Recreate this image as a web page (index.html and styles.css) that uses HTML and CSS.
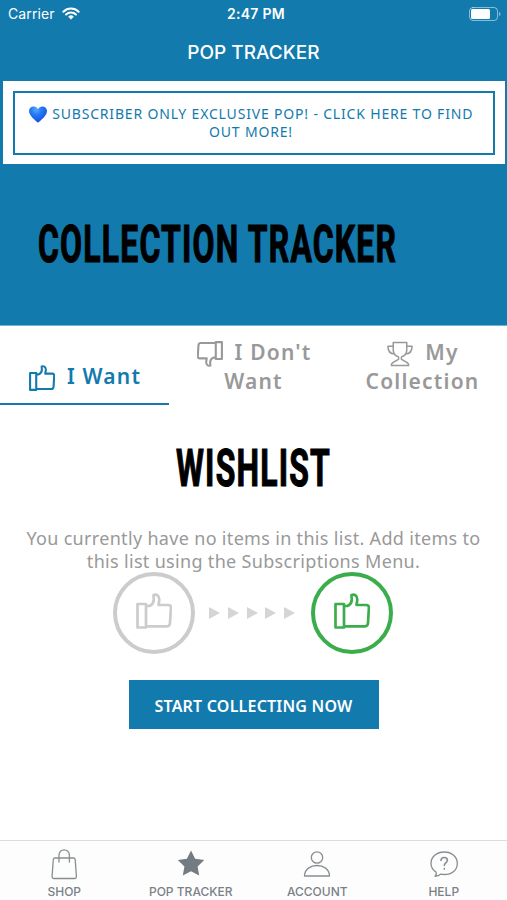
FILE: index.html
```html
<!DOCTYPE html>
<html lang="en">
<head>
  <meta charset="UTF-8">
  <meta name="viewport" content="width=device-width, initial-scale=1.0">
  <title>Pop Tracker</title>
  <link rel="stylesheet" href="styles.css">
</head>
<body>
  <!-- Shared icon shapes -->
  <svg class="sprite" width="0" height="0">
    <symbol id="thumb" viewBox="0 0 36 36">
      <path d="M1.500 11h8.500v23.500h-8.500zM10 13h3.500c2.500-1.200 4-3.200 4.300-6l-.3-5c3-1 5.800.6 5.800 4.500 0 2.200-.6 3.500-.8 5.500h9.700c1.800 0 2.800 1 2.700 2.800l-.9 15.200c-.2 2.200-1.200 3.300-3 3.300H10z"/>
    </symbol>
  </svg>

  <div class="app">
    <header>
      <div class="status-bar">
        <div class="carrier">
          <span>Carrier</span>
          <svg class="wifi" viewBox="0 0 18 13">
            <path d="M1.400 4.700a10.800 10.800 0 0 1 15.200 0M4.100 7.500a7 7 0 0 1 9.800 0" fill="none" stroke="#fff" stroke-width="2.100"/>
            <path d="M6.200 9.700a4 4 0 0 1 5.600 0L9 12.500z" fill="#fff"/>
          </svg>
        </div>
        <div class="time">2:47 PM</div>
        <svg class="battery" viewBox="0 0 32 14">
          <rect x=".5" y=".5" width="28" height="13" rx="3.500" fill="none" stroke="#fff" stroke-opacity=".5"/>
          <rect x="2" y="2" width="19" height="10" rx="1.500" fill="#fff"/>
          <path d="M30 5v4q1.500-.5 1.500-2T30 5z" fill="#fff" fill-opacity=".5"/>
        </svg>
      </div>
      <div class="nav-title">POP TRACKER</div>
    </header>

    <div class="notice">
      <a class="notice-link">
        <svg class="heart" viewBox="0 0 18 17">
          <defs>
            <radialGradient id="heart-fill" cx=".4" cy=".2" r=".8">
              <stop offset="0" stop-color="#55a8ff"/>
              <stop offset=".4" stop-color="#2478f5"/>
              <stop offset="1" stop-color="#124fe0"/>
            </radialGradient>
          </defs>
          <path d="M9 16.800C6 14 0 9.500 0 4.900 0 .3 6-1.500 9 3c3-4.500 9-2.700 9 1.900 0 4.600-6 9.100-9 11.900z" fill="url(#heart-fill)"/>
        </svg>
        SUBSCRIBER ONLY EXCLUSIVE POP! - CLICK HERE TO FIND<br>OUT MORE!
      </a>
    </div>

    <div class="hero">
      <h1><span class="condensed">COLLECTION TRACKER</span></h1>
    </div>

    <div class="tabs">
      <div class="tab active">
        <svg class="tab-icon"><use href="#thumb"/></svg>I Want
      </div>
      <div class="tab">
        <svg class="tab-icon flipped"><use href="#thumb"/></svg>I Don't<br>Want
      </div>
      <div class="tab">
        <svg class="tab-icon trophy" viewBox="0 0 27 26">
          <path d="M6.500 1h14v8c0 4-2.500 6-5.500 7v2.500l6 3.500c1 .7 1.500 1.500 1.500 3h-18c0-1.500.5-2.300 1.500-3l6-3.500V16C9 15 6.500 13 6.500 9zM6.500 5H1c0 4 1.500 8 7 8M20.500 5H26c0 4-1.500 8-7 8"/>
        </svg>My<br>Collection
      </div>
    </div>

    <main>
      <h2><span class="condensed">WISHLIST</span></h2>
      <p>You currently have no items in this list. Add items to<br>this list using the Subscriptions Menu.</p>
      <div class="steps">
        <div class="circle"><svg><use href="#thumb"/></svg></div>
        <div class="arrows"><i></i><i></i><i></i><i></i><i></i></div>
        <div class="circle done"><svg><use href="#thumb"/></svg></div>
      </div>
      <button class="btn">START COLLECTING NOW</button>
    </main>

    <nav>
      <div class="nav-item">
        <svg viewBox="0 0 30 32">
          <path d="M6 10h18.500q1.500 0 1.700 1.500l1.200 16.500q.2 2.500-2 2.500H5.100q-2.200 0-2-2.500l1.200-16.500q.2-1.500 1.700-1.500zM10 14V7a5.200 5.200 0 0 1 10.400 0v7"/>
        </svg>
        <span>SHOP</span>
      </div>
      <div class="nav-item">
        <svg viewBox="0 0 30 32">
          <path class="solid" d="M15 2.500l4.100 8.300 9.100 1.300-6.600 6.400 1.600 9.100L15 23.300l-8.200 4.300 1.600-9.100-6.600-6.400 9.100-1.300z"/>
        </svg>
        <span>POP TRACKER</span>
      </div>
      <div class="nav-item">
        <svg viewBox="0 0 30 32">
          <circle cx="15" cy="9.500" r="5.700"/>
          <path d="M2.500 28c0-14 25-14 25 0z"/>
        </svg>
        <span>ACCOUNT</span>
      </div>
      <div class="nav-item">
        <svg viewBox="0 0 30 32">
          <path d="M6 28.300c1.300-1.200 1.700-2.500 1.100-4.200C3.800 22 2 19 2 15.500 2 9 7.500 4 15.200 4S28.300 9 28.300 15.500 23 26.500 15.200 26.500q-1.700 0-3.200-.4-2.500 2-6 2.200z"/>
          <path class="question" d="M12 12.500q0-3 3.200-3t3.200 2.800c0 2.500-3.100 2.700-3.100 5.200M15.300 20.500v.6"/>
        </svg>
        <span>HELP</span>
      </div>
    </nav>
  </div>
</body>
</html>
```
FILE: styles.css
```css
:root {
  --primary: #127aad;
  --gray: #999;
  --green: #3bad4c;
}

* {
  margin: 0;
  padding: 0;
  box-sizing: border-box;
}

body {
  background-color: white;
  color: black;
  font-family: 'Noto Sans', sans-serif;
}

svg {
  fill: none;
  stroke-linecap: round;
  stroke-linejoin: round;
}

.sprite {
  display: block;
}

.app {
  display: flex;
  flex-direction: column;
  height: 900px;
}

header {
  height: 81px;
  background-color: var(--primary);
  color: white;
  font-family: Inter, sans-serif;
}

.status-bar {
  display: grid;
  grid-template-columns: 1fr 1fr 1fr;
  align-items: center;
  height: 27px;
  padding: 0 6px 0 8px;
  font-size: 13px;
}

.carrier {
  display: flex;
  align-items: center;
  gap: 7px;
  font-size: 14px;
  letter-spacing: 0.1px;
}

.wifi {
  width: 18px;
  height: 13px;
}

.time {
  padding-left: 3px;
  text-align: center;
  font-size: 14px;
  font-weight: 600;
  letter-spacing: 0.3px;
}

.battery {
  width: 32px;
  height: 14px;
  justify-self: end;
}

.nav-title {
  line-height: 51px;
  text-align: center;
  font-size: 19px;
  font-weight: 500;
}

.notice {
  height: 83px;
  padding: 10px;
  border-left: 3px solid var(--primary);
  border-right: 2px solid var(--primary);
  background-color: white;
}

.notice-link {
  display: block;
  height: 64px;
  padding: 12px 6px 0 0;
  border: 2px solid var(--primary);
  color: var(--primary);
  font-size: 14px;
  line-height: 17px;
  letter-spacing: 0.82px;
  text-align: center;
  white-space: nowrap;
}

.heart {
  width: 18px;
  height: 17px;
  margin-right: 1px;
  vertical-align: -4px;
}

.hero {
  height: 162px;
  padding: 49px 38px 0;
  overflow: hidden;
  background-color: var(--primary);
  border-bottom: 1px solid #6fb5d5;
}

h1,
h2 {
  font-family: Roboto, sans-serif;
  font-size: 52px;
  font-weight: 700;
  line-height: 64px;
  white-space: nowrap;
}

.condensed {
  display: inline-block;
  letter-spacing: 2px;
  transform: scaleX(0.613);
  transform-origin: left;
  -webkit-text-stroke: 1.2px black;
}

.tabs {
  display: grid;
  grid-template-columns: repeat(3, 1fr);
  height: 79px;
}

.tab {
  padding-top: 12px;
  color: var(--gray);
  font-size: 21px;
  font-weight: 600;
  line-height: 29px;
  letter-spacing: 1.2px;
  text-align: center;
}

.tab.active {
  padding-top: 36px;
  color: var(--primary);
  border-bottom: 2px solid var(--primary);
}

.tab-icon {
  width: 26px;
  height: 26px;
  margin-left: 1px;
  margin-right: 12px;
  vertical-align: -7px;
  stroke: currentColor;
  stroke-width: 2.900;
}

.flipped {
  transform: rotate(180deg);
}

.trophy {
  stroke-width: 1.600;
}

main {
  flex: 1;
  padding-top: 32px;
  text-align: center;
}

h2 .condensed {
  transform-origin: center;
}

main p {
  margin-top: 26px;
  color: var(--gray);
  font-size: 18px;
  line-height: 23px;
  letter-spacing: 0.32px;
  white-space: nowrap;
}

.steps {
  display: flex;
  justify-content: center;
  align-items: center;
  margin-top: -1px;
  padding-right: 1px;
}

.circle {
  display: flex;
  align-items: center;
  justify-content: center;
  width: 82px;
  height: 82px;
  border: 4.500px solid #ccc;
  border-radius: 50%;
  stroke: #ccc;
}

.circle svg {
  width: 36px;
  height: 36px;
  margin-top: -4px;
  stroke-width: 2.700;
}

.circle.done {
  border-color: var(--green);
  stroke: var(--green);
}

.arrows {
  display: flex;
  justify-content: space-between;
  width: 86px;
  margin: 0 16px 0 14px;
}

.arrows i {
  border: 6px solid transparent;
  border-left: 11px solid #d5d5d5;
  border-right: 0;
}

.btn {
  width: 250px;
  height: 49px;
  margin-top: 26px;
  padding-top: 2px;
  border: none;
  background-color: var(--primary);
  color: white;
  font: 600 16px 'Noto Sans', sans-serif;
  letter-spacing: 0.2px;
  white-space: nowrap;
}

nav {
  display: grid;
  grid-template-columns: repeat(4, 1fr);
  height: 60px;
  padding-left: 1px;
  border-top: 1px solid #ddd;
  background-color: #fdfdfd;
}

.nav-item {
  display: flex;
  flex-direction: column;
  align-items: center;
  padding-top: 7px;
  color: #7b8186;
  font-family: Inter, sans-serif;
  font-size: 12px;
  font-weight: 500;
  line-height: 14px;
}

.nav-item svg {
  width: 30px;
  height: 32px;
  margin-bottom: 5px;
  stroke: #888e91;
  stroke-width: 1.300;
}

.nav-item .solid {
  fill: #737b83;
  stroke: none;
}

.nav-item .question {
  stroke-width: 1.600;
}
```
